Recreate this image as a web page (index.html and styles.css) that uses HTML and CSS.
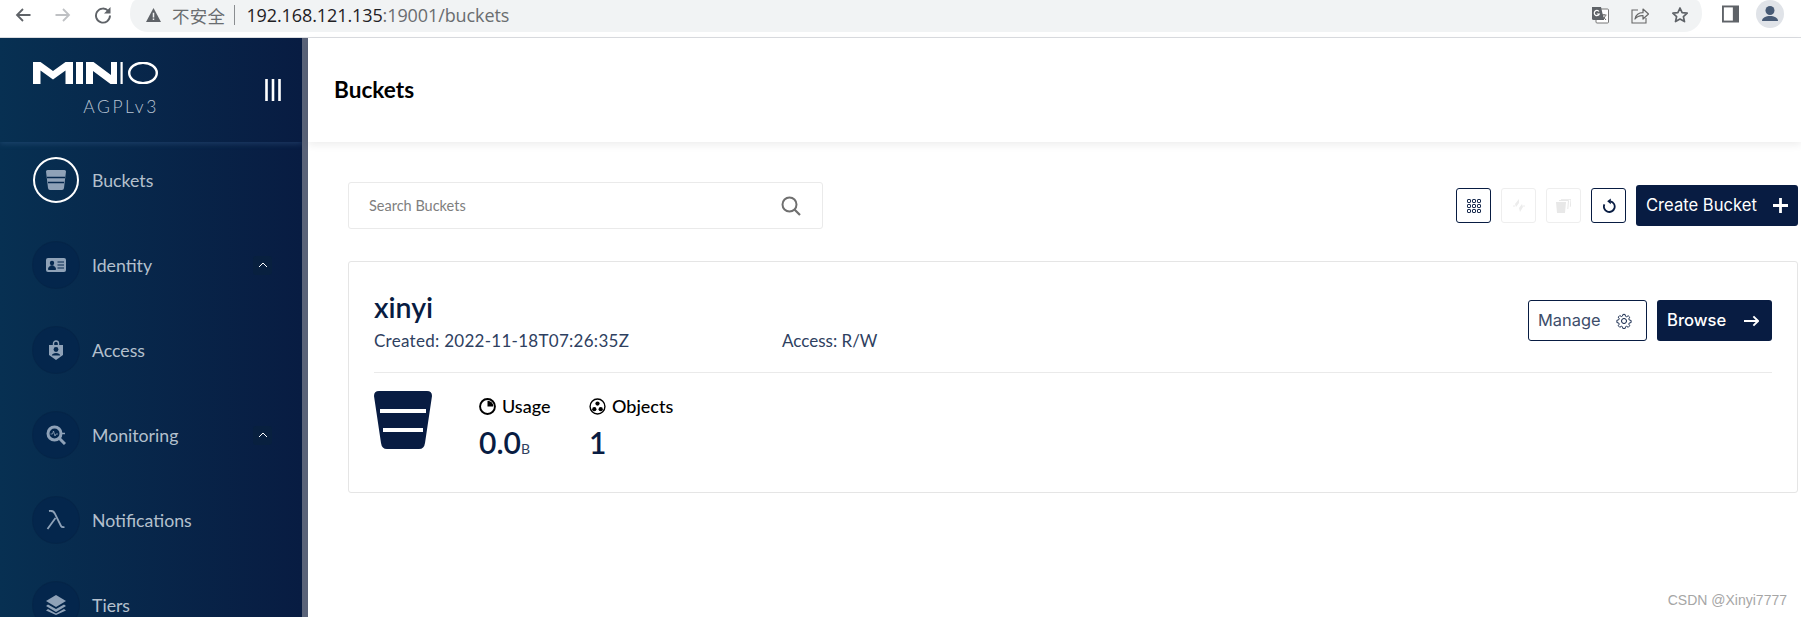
FILE: index.html
```html
<!DOCTYPE html>
<html lang="en">
<head>
<meta charset="utf-8">
<title>MinIO Console</title>
<link rel="stylesheet" href="styles.css">
</head>
<body>
<header class="chrome">
  <div class="nav-btns">
    <svg class="c-ico" viewBox="0 0 18 18"><path d="M16.500 9H3M9 3 3 9l6 6" fill="none" stroke="#5f6368" stroke-width="1.800"/></svg>
    <svg class="c-ico" viewBox="0 0 18 18"><path d="M1.500 9H15M9 3l6 6-6 6" fill="none" stroke="#bfc1c4" stroke-width="1.800"/></svg>
    <svg class="c-ico" viewBox="0 0 18 18"><path d="M14.300 5A7 7 0 1 0 16 9.500" fill="none" stroke="#5f6368" stroke-width="1.900"/><path d="M16.500 1v6.500H10z" fill="#5f6368"/></svg>
  </div>
  <div class="omnibox">
    <div class="omni-left">
      <svg class="warn" viewBox="0 0 14 13"><path d="M7 0 14 13H0z" fill="#5f6368"/><path d="M6.300 4.500h1.400v4.300H6.300zM6.300 9.700h1.400v1.400H6.300z" fill="#f1f3f4"/></svg>
      <span class="insecure">不安全</span>
      <span class="omni-sep"></span>
      <span class="url"><span class="host">192.168.121.135</span>:19001/buckets</span>
    </div>
    <div class="omni-right">
      <svg class="o-ico" viewBox="0 0 18 18"><rect x="5" y="3" width="12.500" height="14" rx="1" fill="#fff" stroke="#777"/><path d="M1 1h9l3 13H2.500Q1 14 1 12.500z" fill="#5f6368"/><path d="M8 5.500A2.600 2.600 0 1 0 8.300 8H5.800" fill="none" stroke="#fff" stroke-width="1.200"/><path d="M11 9h4.500M13 8v1M11.800 14l2.800-4.500M12 10.500l3 3.500" fill="none" stroke="#555" stroke-width=".9"/></svg>
      <svg class="o-ico" viewBox="0 0 18 18"><path d="M7 4H1v13h14v-5" fill="none" stroke="#666" stroke-width="1.100"/><path d="M4 13c.5-4 4-6.500 8-6.300V3l5.500 5-5.500 5V9.700C8.500 9.500 6 10.500 4 13z" fill="none" stroke="#666" stroke-width="1.200" stroke-linejoin="round"/></svg>
      <svg class="o-ico" viewBox="0 0 18 18"><path d="m9 2 2.100 4.700 5.100.5-3.800 3.400 1.100 5L9 13l-4.500 2.600 1.100-5L1.800 7.200l5.100-.5z" fill="none" stroke="#5f6368" stroke-width="1.700" stroke-linejoin="round"/></svg>
    </div>
  </div>
  <div class="chrome-right">
    <svg class="panel" viewBox="0 0 18 18"><rect width="18" height="18" fill="#5f6368"/><rect x="2" y="2" width="9.500" height="14" fill="#fff"/></svg>
    <div class="avatar"><svg viewBox="0 0 28 28"><circle cx="14" cy="10.500" r="4.500" fill="#475a75"/><path d="M6 21c0-3.500 4-5 8-5s8 1.500 8 5z" fill="#475a75"/></svg></div>
  </div>
</header>

<div class="app">
  <aside class="sidebar">
    <div class="brand">
      <div class="brand-logo">
        <svg class="logo" viewBox="0 0 125 22" role="img" aria-label="MinIO">
          <path d="M0 22V0h7.500L20 9 32.500 0H40v22h-7.500V8.500L20 17.500 7.500 8.500V22z" fill="#fff"/>
          <rect x="43" width="7" height="22" fill="#fff"/>
          <path d="M53 22V0h7.500L78 13V0h6v22h-6.500L60 9v13z" fill="#fff"/>
          <rect x="87.500" width="2.200" height="22" fill="#fff"/>
          <ellipse cx="110" cy="11" rx="13.800" ry="10.200" fill="none" stroke="#fff" stroke-width="2.400"/>
        </svg>
        <span class="license">AGPLv3</span>
      </div>
      <svg class="collapse" viewBox="0 0 16 22"><path d="M1.500 0v22M8 0v22M14.500 0v22" stroke="#fff" stroke-width="2.600" fill="none"/></svg>
    </div>
    <nav class="menu">
      <a class="item active">
        <span class="circle"><svg viewBox="0 0 20 20"><path d="M1.500 0h17q1.500 0 1.500 1.500L18 18q-.2 2-2 2H4q-1.800 0-2-2L0 1.500Q0 0 1.500 0z" fill="#8fa2b8"/><path d="M1 7.500h18M2 12.500h16" stroke="#06294f" stroke-width="1.300"/></svg></span>
        <span class="label">Buckets</span>
      </a>
      <a class="item">
        <span class="circle"><svg viewBox="0 0 20 20"><rect y="3" width="20" height="14" rx="2" fill="#8fa2b8"/><circle cx="6" cy="8" r="2.200" fill="#06294f"/><path d="M2.500 14.500c0-5 7-5 7 0zM11.500 7H18M11.500 10H18M11.500 13H18" fill="#06294f" stroke="#06294f" stroke-width="1"/></svg></span>
        <span class="label">Identity</span>
        <span class="chev"><svg viewBox="0 0 10 6"><path d="M1 5l4-4 4 4" fill="none" stroke="#fff" stroke-width="1"/></svg></span>
      </a>
      <a class="item">
        <span class="circle"><svg viewBox="0 0 20 20"><path d="M7.500 6V3.500a2.500 2.500 0 0 1 5 0V6" fill="none" stroke="#8fa2b8" stroke-width="1.400"/><path d="M3 5h14v10l-7 5-7-5z" fill="#8fa2b8"/><circle cx="10" cy="9.500" r="2.400" fill="#06294f"/><path d="M5.800 15.500c0-3.500 8.400-3.500 8.400 0z" fill="#06294f"/></svg></span>
        <span class="label">Access</span>
      </a>
      <a class="item">
        <span class="circle"><svg viewBox="0 0 20 20"><circle cx="8.500" cy="8.500" r="6.500" fill="none" stroke="#8fa2b8" stroke-width="3"/><path d="M13 13l6 6" stroke="#8fa2b8" stroke-width="3"/><path d="M15 8.500h4" stroke="#8fa2b8" stroke-width="1.500"/><path d="M4.500 9h2l1-3 1.500 5 1-2h2" fill="none" stroke="#8fa2b8" stroke-width=".8"/></svg></span>
        <span class="label">Monitoring</span>
        <span class="chev"><svg viewBox="0 0 10 6"><path d="M1 5l4-4 4 4" fill="none" stroke="#fff" stroke-width="1"/></svg></span>
      </a>
      <a class="item">
        <span class="circle"><svg viewBox="0 0 20 20"><path d="M3 1c3-.5 5 0 6 3l6 12c.5 1 1.500 1.500 3.500 1M9.500 8 1.500 19" fill="none" stroke="#8fa2b8" stroke-width="1.800"/></svg></span>
        <span class="label">Notifications</span>
      </a>
      <a class="item">
        <span class="circle"><svg viewBox="0 0 20 20"><path d="M10 0 20 6l-10 6L0 6z" fill="#8fa2b8"/><path d="M2 9.500 10 14l8-4.500 2 1.500-10 6-10-6zM2 14l8 4.500 8-4.500 2 1.500-10 4.500-10-4.500z" fill="#8fa2b8"/></svg></span>
        <span class="label">Tiers</span>
      </a>
    </nav>
  </aside>
  <div class="rail"></div>

  <main class="content">
    <div class="page-head"><h1>Buckets</h1></div>
    <div class="page-body">
      <div class="toolbar">
        <div class="search">
          <span class="placeholder">Search Buckets</span>
          <svg class="search-ico" viewBox="0 0 20 20"><circle cx="8.500" cy="8.500" r="7" fill="none" stroke="#6f6f6f" stroke-width="2"/><path d="M13.500 13.500 19 19" stroke="#6f6f6f" stroke-width="2.200"/></svg>
        </div>
        <div class="actions">
          <button class="square"><svg viewBox="0 0 14 14"><g fill="none" stroke="#081c42" stroke-width="1"><rect x=".5" y=".5" width="3" height="3" rx=".6"/><rect x="5.500" y=".5" width="3" height="3" rx=".6"/><rect x="10.500" y=".5" width="3" height="3" rx=".6"/><rect x=".5" y="5.500" width="3" height="3" rx=".6"/><rect x="5.500" y="5.500" width="3" height="3" rx=".6"/><rect x="10.500" y="5.500" width="3" height="3" rx=".6"/><rect x=".5" y="10.500" width="3" height="3" rx=".6"/><rect x="5.500" y="10.500" width="3" height="3" rx=".6"/><rect x="10.500" y="10.500" width="3" height="3" rx=".6"/></g></svg></button>
          <button class="square off"><svg viewBox="0 0 14 14"><path d="M7 0 3 5l1 3 3-4zM8 13l3-5-1-3-3 4z" fill="#ececec"/><path d="M1 7h2M11 7h2" stroke="#ececec"/></svg></button>
          <button class="square off"><svg class="stack" viewBox="0 0 15 14"><path d="M0 3h10l-1 11H1z" fill="#e8e8e8"/><path d="M3 1.500h9.500l-.7 8.500M5 .3h10l-.7 7.500" fill="none" stroke="#e8e8e8"/></svg></button>
          <button class="square"><svg class="reload" viewBox="0 0 14 16"><path d="M2.400 6.300A5.400 5.400 0 1 0 8.500 3.300" fill="none" stroke="#081c42" stroke-width="1.800"/><path d="M8.800.4v5.800L5.200 3.300z" fill="#081c42"/></svg></button>
          <button class="primary create"><span>Create Bucket</span><svg viewBox="0 0 14 14"><path d="M7 0v14M0 7h14" stroke="#fff" stroke-width="2.600"/></svg></button>
        </div>
      </div>

      <section class="card">
        <div class="card-top">
          <div class="card-info">
            <h2>xinyi</h2>
            <div class="meta"><span class="created">Created: 2022-11-18T07:26:35Z</span><span>Access: R/W</span></div>
          </div>
          <div class="card-btns">
            <button class="outline"><span>Manage</span><svg viewBox="0 0 16 16"><path d="M6.800 1h2.400l.4 2 1.300.6 1.800-1.100 1.700 1.700-1.100 1.800.6 1.300 2 .4v2.400l-2 .4-.6 1.300 1.100 1.800-1.700 1.700-1.800-1.100-1.300.6-.4 2H6.800l-.4-2-1.300-.6-1.800 1.100-1.700-1.700 1.100-1.800-.6-1.300-2-.4V7.500l2-.4.6-1.300-1.100-1.800 1.700-1.700 1.800 1.100 1.300-.6z" transform="translate(.8 .5) scale(.9)" fill="none" stroke="#081c42"/><circle cx="8" cy="8" r="2.500" fill="none" stroke="#081c42"/></svg></button>
            <button class="primary browse"><span>Browse</span><svg viewBox="0 0 16 12"><path d="M0 6h14.500M10 1l5 5-5 5" fill="none" stroke="#fff" stroke-width="2"/></svg></button>
          </div>
        </div>
        <div class="card-bottom">
          <svg class="bucket" viewBox="0 0 58 58"><path d="M5 0h48q5 0 5 5L51 52q-.8 6-6 6H13q-5.200 0-6-6L0 5q0-5 5-5z" fill="#081c42"/><rect x="6" y="18" width="46" height="4" fill="#fff"/><rect x="9" y="37" width="40" height="4" fill="#fff"/></svg>
          <div class="stat usage">
            <div class="stat-head"><svg viewBox="0 0 16 16"><circle cx="8" cy="8" r="7" fill="none" stroke="#000" stroke-width="1.800"/><path d="M8 2.500A5.500 5.500 0 0 1 13.500 8H8z" fill="#000"/></svg>Usage</div>
            <div class="stat-val">0.0<small>B</small></div>
          </div>
          <div class="stat">
            <div class="stat-head"><svg viewBox="0 0 16 16"><circle cx="8" cy="8" r="7" fill="none" stroke="#000" stroke-width="1.300"/><circle cx="8" cy="5.200" r="2" fill="#000"/><circle cx="5" cy="10.500" r="2" fill="#000"/><circle cx="11" cy="10.500" r="2" fill="#000"/></svg>Objects</div>
            <div class="stat-val">1</div>
          </div>
        </div>
      </section>
      <div class="watermark">CSDN @Xinyi7777</div>
    </div>
  </main>
</div>
</body>
</html>
```
FILE: styles.css
```css
* { box-sizing: border-box; }
html, body { margin: 0; height: 100%; }
body {
  width: 1801px;
  height: 617px;
  overflow: hidden;
  display: flex;
  flex-direction: column;
  background: #fff;
  font-family: "Lato", "Noto Sans", sans-serif;
}
button { font: inherit; padding: 0; background: none; cursor: pointer; }
svg { display: block; }

/* browser chrome */
.chrome {
  flex: 0 0 38px;
  display: flex;
  align-items: flex-start;
  padding-left: 14px;
  border-bottom: 1px solid #dadce0;
}
.nav-btns { display: flex; gap: 22px; padding-top: 6px; margin-right: 18px; }
.c-ico { width: 18px; height: 18px; }
.omnibox {
  width: 1572px;
  height: 32px;
  background: #f1f3f4;
  border-radius: 6px 6px 18px 18px / 14px 14px 18px 18px;
  display: flex;
  justify-content: space-between;
  align-items: center;
  padding: 0 13px 2px 16px;
}
.omni-left { display: flex; align-items: center; }
.warn { width: 15px; height: 14px; margin-right: 11px; }
.insecure { font: 17.500px "Noto Sans CJK SC", sans-serif; color: #6a6d70; letter-spacing: .3px; }
.omni-sep { width: 1px; height: 20px; background: #8a8d90; margin: 0 11px 0 9px; }
.url { font: 18px "Open Sans", sans-serif; color: #6a6d70; letter-spacing: -.1px; }
.host { color: #1f2124; }
.omni-right { display: flex; gap: 22px; }
.o-ico { width: 18px; height: 18px; }
.chrome-right { display: flex; align-items: flex-start; gap: 17px; margin-left: 20px; }
.panel { width: 17px; height: 18px; margin-top: 5px; }
.avatar { width: 28px; height: 28px; border-radius: 50%; background: #e0e3e8; }

/* app */
.app { flex: 1; min-height: 0; display: flex; }
.sidebar {
  width: 302px;
  flex: none;
  display: flex;
  flex-direction: column;
  overflow: hidden;
  background: linear-gradient(90deg, #073052 0%, #081c42 100%);
  color: #fff;
}
.rail { width: 6px; flex: none; background: #5a6378; }
.brand {
  flex: 0 0 104px;
  display: flex;
  align-items: flex-start;
  justify-content: space-between;
  padding: 24px 21px 0 33px;
  box-shadow: 0 2px 5px rgba(60,100,150,.35);
}
.brand-logo { display: flex; flex-direction: column; align-items: flex-end; width: 125px; }
.logo { width: 125px; height: 22px; }
.license { font-size: 17.500px; letter-spacing: 2.600px; color: #b8c4d4; font-weight: 300; margin: 13px -1px 0 0; line-height: 20px; }
.collapse { width: 16px; height: 22px; margin-top: 17px; }
.menu { display: flex; flex-direction: column; gap: 39px; padding: 15px 30px 0 33px; }
.item { display: flex; align-items: center; height: 46px; flex: none; }
.circle {
  width: 46px;
  height: 46px;
  border-radius: 50%;
  flex: none;
  display: flex;
  align-items: center;
  justify-content: center;
  background: #04264c;
  box-shadow: 0 0 0 1px rgba(3,30,65,.5);
  margin-right: 13px;
}
.circle svg { width: 20px; height: 20px; }
.active .circle { background: transparent; border: 2px solid #fff; box-shadow: none; }
.label { font-size: 17.700px; color: #b4c0cd; flex: 1; }
.chev {
  width: 19px;
  height: 19px;
  flex: none;
  border-radius: 3px;
  background: #08203f;
  display: flex;
  align-items: center;
  justify-content: center;
}
.chev svg { width: 10px; height: 6px; }

/* page */
.content { flex: 1; min-width: 0; display: flex; flex-direction: column; }
.page-head {
  flex: 0 0 104px;
  display: flex;
  align-items: center;
  padding-left: 26px;
  box-shadow: 0 3px 8px rgba(0,0,0,.07);
}
h1 { margin: 0; font-size: 22.600px; font-weight: 700; color: #000; padding-bottom: 2px; }
.page-body { flex: 1; padding: 40px 3px 0 40px; position: relative; }
.toolbar { display: flex; justify-content: space-between; align-items: center; height: 47px; }
.search {
  width: 475px;
  height: 47px;
  border: 1px solid #eaeaea;
  border-radius: 3px;
  display: flex;
  align-items: center;
  justify-content: space-between;
  padding: 0 21px 0 20px;
}
.placeholder { font-size: 14.500px; color: #7e7e7e; }
.search-ico { width: 20px; height: 20px; }
.actions { display: flex; align-items: center; gap: 10px; }
.square {
  width: 35px;
  height: 35px;
  border: 1px solid #081c42;
  border-radius: 3px;
  display: flex;
  align-items: center;
  justify-content: center;
}
.square svg { width: 14px; height: 14px; }
.square .stack { width: 15px; }
.square .reload { height: 16px; }
.square.off { border-color: #eeeeee; }
.primary {
  background: #081c42;
  color: #fff;
  border: 0;
  border-radius: 3px;
  display: flex;
  align-items: center;
  justify-content: space-between;
  font-family: "Inter", sans-serif;
  font-size: 16.600px;
}
.create { width: 162px; height: 41px; padding: 0 10px 2px; }
.create svg { width: 15px; height: 15px; margin-top: 2px; }
.card {
  margin-top: 32px;
  height: 232px;
  border: 1px solid #e5e5e5;
  border-radius: 3px;
  padding: 0 25px;
}
.card-top {
  height: 111px;
  display: flex;
  justify-content: space-between;
  align-items: flex-start;
  border-bottom: 1px solid #eaeaea;
}
h2 { margin: 29px 0 0; font-size: 28.500px; line-height: 32px; font-weight: 600; color: #081c42; }
.meta { display: flex; font-size: 17px; color: #2e4060; margin-top: 8px; line-height: 20px; }
.created { width: 408px; letter-spacing: .28px; }
.card-btns { display: flex; gap: 10px; margin-top: 38px; }
.outline {
  width: 119px;
  height: 41px;
  border: 1px solid #081c42;
  border-radius: 3px;
  background: #fff;
  color: #3d4d6a;
  font-family: "Inter", sans-serif;
  font-size: 16.400px;
  display: flex;
  align-items: center;
  justify-content: space-between;
  padding: 0 14px 2px 9px;
}
.outline svg { width: 16px; height: 16px; margin-top: 2px; }
.browse { width: 115px; height: 41px; padding: 0 13px 2px 10px; font-weight: 500; }
.browse svg { width: 15px; height: 12px; margin-top: 2px; }
.card-bottom { display: flex; align-items: flex-start; padding-top: 18px; }
.bucket { width: 58px; height: 58px; margin-right: 47px; }
.stat { display: flex; flex-direction: column; }
.usage { width: 110px; }
.stat-head { display: flex; align-items: center; gap: 6px; font-size: 18px; color: #000; line-height: 20px; margin-top: 5px; font-weight: 500; }
.stat-head svg { width: 17px; height: 17px; }
.stat-val { font-size: 30px; line-height: 36px; color: #081c42; font-weight: 600; margin-top: 8px; }
.stat-val small { font-size: 14px; font-weight: 400; color: #2e4060; }
.watermark { position: absolute; right: 14px; bottom: 9px; font: 14px "Liberation Sans", sans-serif; color: #a6a6a6; }
```
